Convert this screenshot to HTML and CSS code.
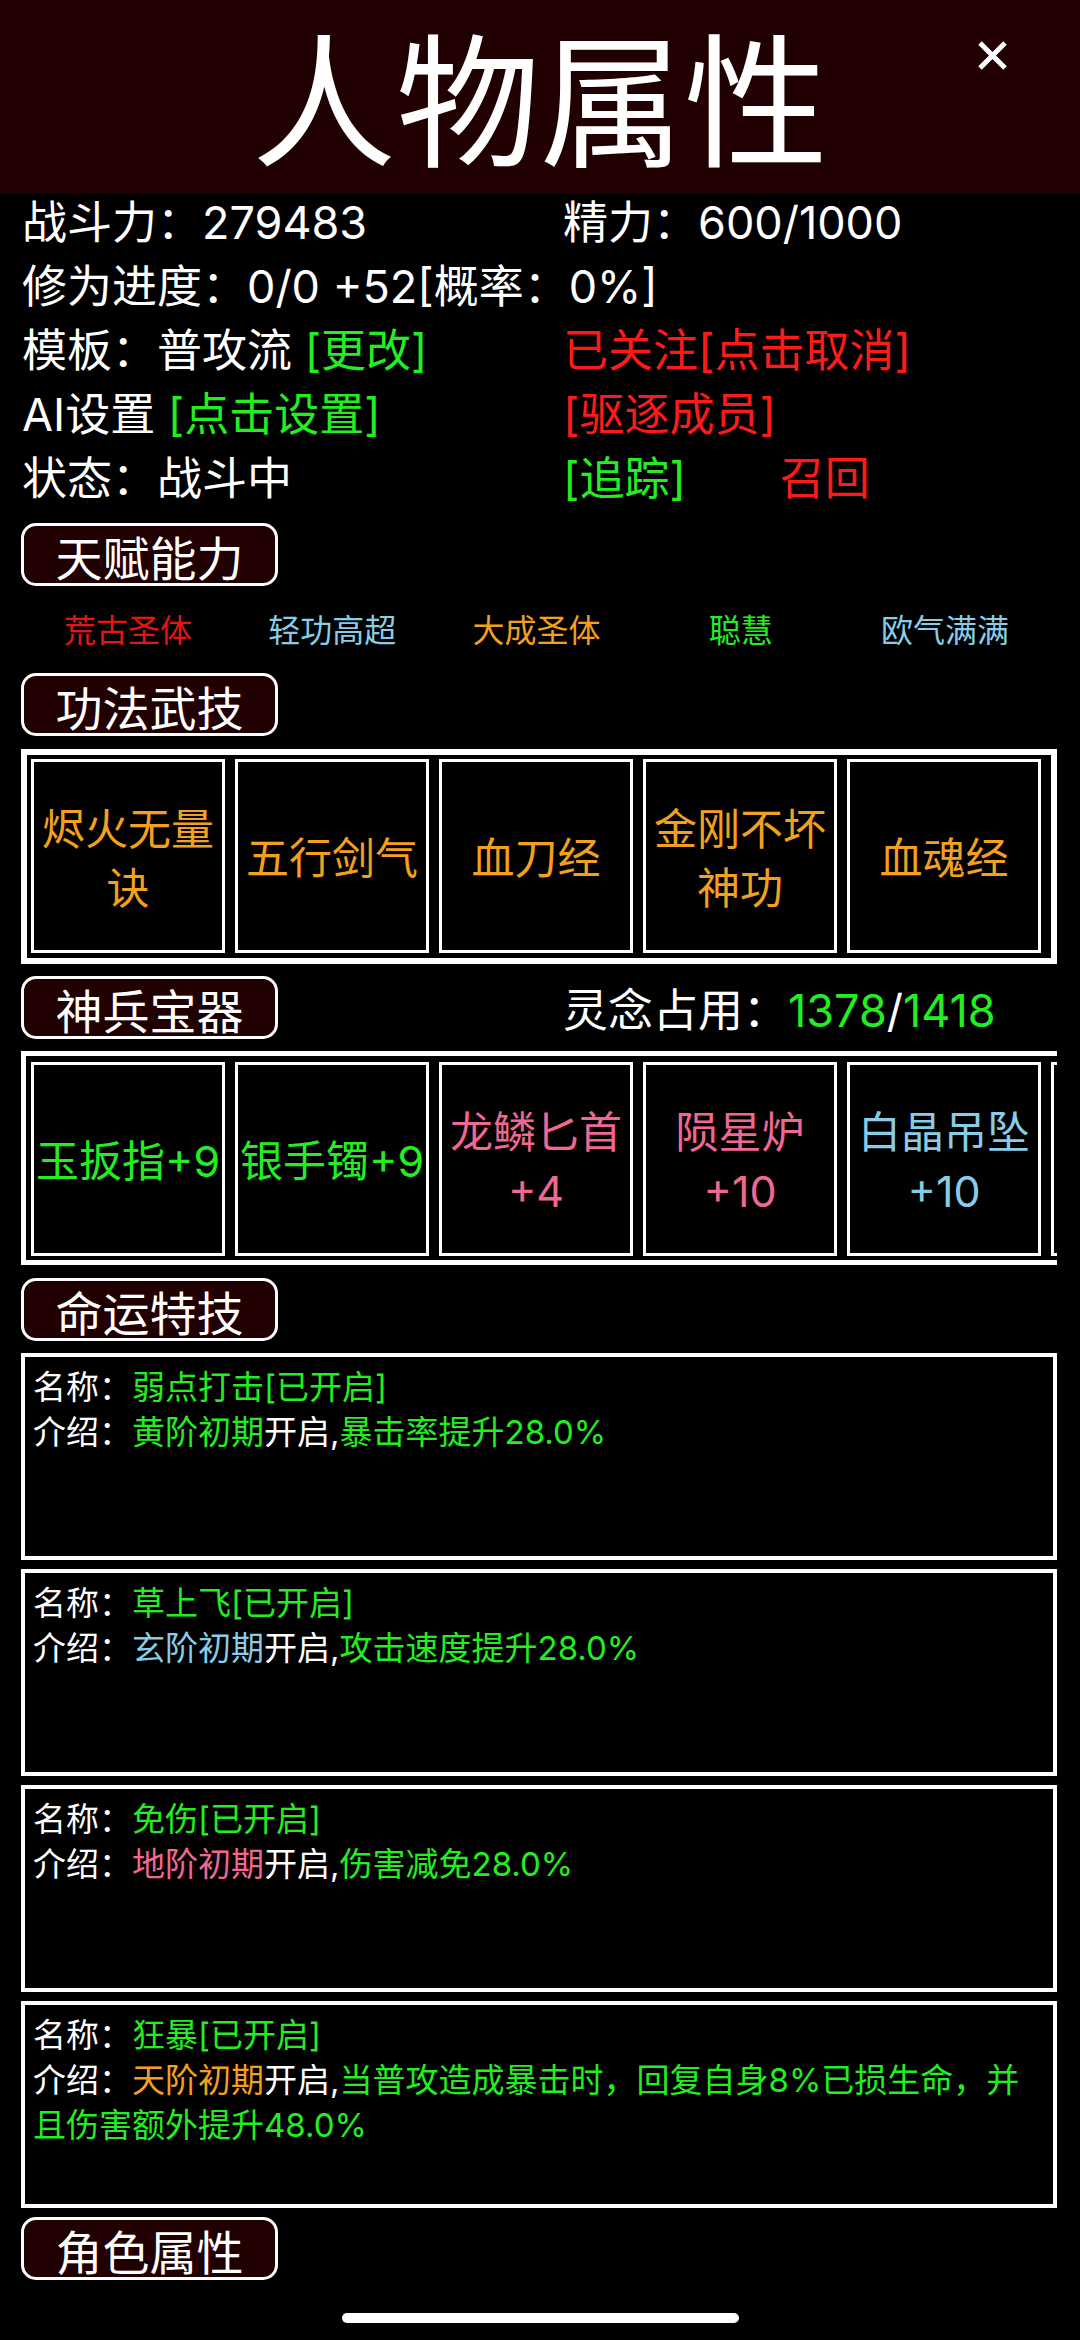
FILE: index.html
```html
<!DOCTYPE html>
<html lang="zh-CN">
<head>
    <meta charset="UTF-8" />
    <meta name="viewport" content="width=device-width, initial-scale=1.0" />
    <title>人物属性</title>
    <link rel="stylesheet" href="styles.css">
</head>
<body>
    <div class="header">
        <h1 class="title">人物属性</h1>
        <svg class="close" width="31" height="31" viewBox="0 0 31 31">
            <path d="M3 3 L28 28 M28 3 L3 28" stroke="#fff" stroke-width="5" fill="none" />
        </svg>
    </div>

    <div class="page">
        <div class="info">
            <div class="row"><span>战斗力：279483</span><span>精力：600/1000</span></div>
            <div class="row"><span class="wide">修为进度：0/0 +52[概率：0%]</span></div>
            <div class="row"><span>模板：普攻流 <span class="green">[更改]</span></span><span class="red">已关注[点击取消]</span></div>
            <div class="row"><span>AI设置 <span class="green">[点击设置]</span></span><span class="red">[驱逐成员]</span></div>
            <div class="row"><span>状态：战斗中</span><span><span class="green">[追踪]</span><span class="red recall">召回</span></span></div>
        </div>

        <div class="label talent-label">天赋能力</div>
        <div class="talents">
            <span class="red2">荒古圣体</span>
            <span class="blue">轻功高超</span>
            <span class="orange">大成圣体</span>
            <span class="green">聪慧</span>
            <span class="blue">欧气满满</span>
        </div>

        <div class="label skill-label">功法武技</div>
        <div class="slots skills">
            <div class="cell orange">烬火无量诀</div>
            <div class="cell orange">五行剑气</div>
            <div class="cell orange">血刀经</div>
            <div class="cell orange">金刚不坏神功</div>
            <div class="cell orange">血魂经</div>
        </div>

        <div class="label-row">
            <div class="label">神兵宝器</div>
            <div class="spirit">灵念占用：<span class="green">1378</span>/<span class="green">1418</span></div>
        </div>
        <div class="slots gear">
            <div class="cell green">玉扳指+9</div>
            <div class="cell green">银手镯+9</div>
            <div class="cell pink">龙鳞匕首+4</div>
            <div class="cell pink">陨星炉+10</div>
            <div class="cell blue">白晶吊坠+10</div>
            <div class="cell"></div>
        </div>

        <div class="label fate-label">命运特技</div>
        <div class="fate first">
            <div>名称：<span class="green">弱点打击[已开启]</span></div>
            <div>介绍：<span class="green">黄阶初期</span>开启,<span class="green">暴击率提升28.0%</span></div>
        </div>
        <div class="fate">
            <div>名称：<span class="green">草上飞[已开启]</span></div>
            <div>介绍：<span class="blue">玄阶初期</span>开启,<span class="green">攻击速度提升28.0%</span></div>
        </div>
        <div class="fate">
            <div>名称：<span class="green">免伤[已开启]</span></div>
            <div>介绍：<span class="pink">地阶初期</span>开启,<span class="green">伤害减免28.0%</span></div>
        </div>
        <div class="fate">
            <div>名称：<span class="green">狂暴[已开启]</span></div>
            <div>介绍：<span class="orange">天阶初期</span>开启,<span class="green">当普攻造成暴击时，回复自身8%已损生命，并且伤害额外提升48.0%</span></div>
        </div>

        <div class="label role-label">角色属性</div>
        <div class="home-bar"></div>
    </div>
</body>
</html>
```

FILE: styles.css
```css
* { margin: 0; padding: 0; box-sizing: border-box; }
body {
    width: 1080px;
    min-height: 2340px;
    background: #000;
    color: #fff;
    font-family: "Noto Sans CJK SC", "Noto Sans", sans-serif;
}
.row, .spirit, .cell, .fate {
    font-family: Inter, "Noto Sans CJK SC", sans-serif;
}
.header {
    position: relative;
    height: 194px;
    background: #200000;
    display: flex;
    align-items: center;
    justify-content: center;
    padding-bottom: 8px;
}
.title {
    font-size: 144px;
    font-weight: 400;
    line-height: 1.2;
    color: #fff;
}
.close {
    position: absolute;
    top: 40px;
    right: 72px;
}
.page {
    padding: 0 0 0 21px;
    display: flex;
    flex-direction: column;
}
.green { color: #22ee22; }
.red { color: #ff1a1a; }
.red2 { color: #e81414; }
.blue { color: #88cce8; }
.orange { color: #f2a01e; }
.pink { color: #f06892; }

.info {
    display: flex;
    flex-direction: column;
    gap: 12px;
    padding: 3px 0 0 1px;
    margin-bottom: -3px;
}
.row {
    display: grid;
    grid-template-columns: 541px 1fr;
    font-size: 45px;
    line-height: 52px;
    white-space: nowrap;
}
.row .wide { grid-column: 1 / 3; }
.recall { margin-left: 94px; }

.label {
    width: 257px;
    height: 63px;
    border: 3px solid #fff;
    border-radius: 15px;
    background: #200000;
    display: flex;
    align-items: center;
    justify-content: center;
    font-size: 47px;
    line-height: 1;
    padding-top: 2px;
}
.talent-label { margin-top: 21px; }
.skill-label { margin-top: 23px; }
.fate-label { margin-top: 13px; }
.role-label { margin-top: 9px; }

.talents {
    margin-top: 20px;
    width: 1026px;
    padding-left: 5px;
    display: grid;
    grid-template-columns: repeat(5, 1fr);
    font-size: 32px;
    line-height: 44px;
    text-align: center;
}

.slots {
    width: 1036px;
    display: flex;
    gap: 10px;
    overflow: hidden;
    margin-top: 13px;
}
.skills {
    border: 6px solid #fff;
    padding: 4px 4px 5px 4px;
}
.gear {
    margin-top: 12px;
    border: 5px solid #fff;
    border-right: none;
    padding: 6px 0 4px 5px;
}
.cell {
    flex: 0 0 194px;
    height: 194px;
    border: 3px solid #fff;
    display: flex;
    align-items: center;
    justify-content: center;
    text-align: center;
    font-size: 43px;
    line-height: 59px;
    padding-top: 5px;
}

.label-row {
    margin-top: 12px;
    display: grid;
    grid-template-columns: 542px 1fr;
    align-items: center;
}
.spirit {
    font-size: 45px;
    line-height: 52px;
    padding-top: 6px;
    white-space: nowrap;
}

.fate {
    width: 1036px;
    height: 207px;
    border: 4px solid #fff;
    padding: 8px 14px 0 8px;
    margin-top: 9px;
    font-size: 33px;
    line-height: 45px;
}
.fate.first { margin-top: 12px; }

.home-bar {
    align-self: center;
    margin: 33px 21px 0 0;
    width: 397px;
    height: 10px;
    border-radius: 5px;
    background: #fff;
}
```
